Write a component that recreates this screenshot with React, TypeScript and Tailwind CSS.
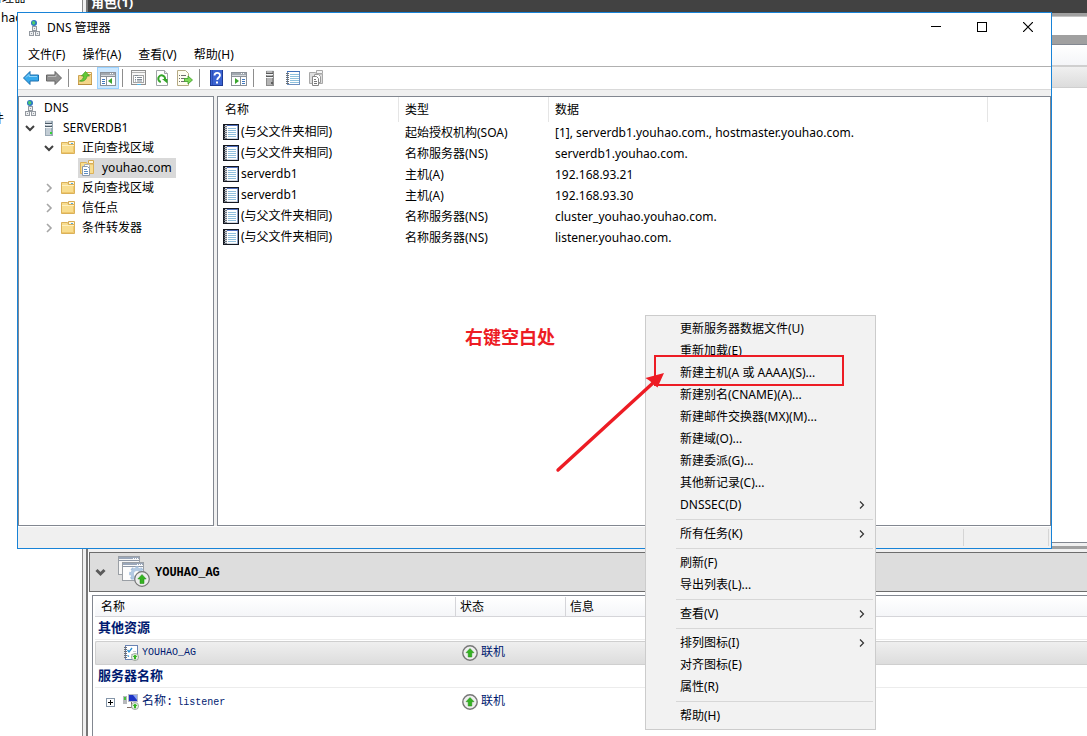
import { useState } from 'react'
import type { ReactNode } from 'react'
import clsx from 'clsx'

interface DnsRecord {
  name: string
  type: string
  data: string
}

interface MenuEntry {
  label: string
  submenu?: boolean
}

const RECORDS: DnsRecord[] = [
  { name: '(与父文件夹相同)', type: '起始授权机构(SOA)', data: '[1], serverdb1.youhao.com., hostmaster.youhao.com.' },
  { name: '(与父文件夹相同)', type: '名称服务器(NS)', data: 'serverdb1.youhao.com.' },
  { name: 'serverdb1', type: '主机(A)', data: '192.168.93.21' },
  { name: 'serverdb1', type: '主机(A)', data: '192.168.93.30' },
  { name: '(与父文件夹相同)', type: '名称服务器(NS)', data: 'cluster_youhao.youhao.com.' },
  { name: '(与父文件夹相同)', type: '名称服务器(NS)', data: 'listener.youhao.com.' },
]

// Each inner array is a block between separators
const CONTEXT_MENU: MenuEntry[][] = [
  [
    { label: '更新服务器数据文件(U)' },
    { label: '重新加载(E)' },
    { label: '新建主机(A 或 AAAA)(S)...' },
    { label: '新建别名(CNAME)(A)...' },
    { label: '新建邮件交换器(MX)(M)...' },
    { label: '新建域(O)...' },
    { label: '新建委派(G)...' },
    { label: '其他新记录(C)...' },
    { label: 'DNSSEC(D)', submenu: true },
  ],
  [{ label: '所有任务(K)', submenu: true }],
  [{ label: '刷新(F)' }, { label: '导出列表(L)...' }],
  [{ label: '查看(V)', submenu: true }],
  [{ label: '排列图标(I)', submenu: true }, { label: '对齐图标(E)' }, { label: '属性(R)' }],
  [{ label: '帮助(H)' }],
]

/* ---------- Icons ---------- */

function Icon({ children, size = 16 }: { children: ReactNode; size?: number }) {
  return (
    <svg width={size} height={size} viewBox={`0 0 ${size} ${size}`} className="shrink-0" aria-hidden="true">
      {children}
    </svg>
  )
}

function DnsIcon() {
  return (
    <Icon>
      <circle cx="8" cy="3" r="3" fill="#2b74c4" />
      <path d="M6.500 1l2 .3 1 1.600-1.600 2L6 3.500z" fill="#4ccf6a" />
      <rect x="6.500" y="6.500" width="4" height="4" fill="#eceef0" stroke="#9399a0" />
      <path d="M8 8.500h1M8.500 11v1" stroke="#9399a0" />
      <rect x="3.500" y="11.500" width="4" height="4" fill="#eceef0" stroke="#9399a0" />
      <rect x="9.500" y="11.500" width="4" height="4" fill="#eceef0" stroke="#9399a0" />
      <path d="M5 13.500h1M11 13.500h1" stroke="#9399a0" />
    </Icon>
  )
}

function ServerIcon({ light = true }: { light?: boolean }) {
  return (
    <Icon>
      <path d="M4 1l1-1h7l-1 1z" fill="#e8ebee" />
      <rect x="4" y="1" width="8" height="15" fill={light ? '#9aa9b5' : '#8c8c8c'} />
      <rect x="5" y="1" width="5" height="14" fill={light ? '#c3cdd5' : '#b5b5b5'} />
      <path d="M4 3.500h7M4 6.500h7" stroke={light ? '#4c5a66' : '#5a5a5a'} />
      <path d="M4 4.500h7M4 7.500h7" stroke="#f4f7f9" />
      <rect x="9" y="12" width="2" height="2" fill={light ? '#35d235' : '#5f5f5f'} />
    </Icon>
  )
}

function FolderIcon() {
  return (
    <Icon>
      <path d="M8.500 1.500h6v4h-6z" fill="#fff7de" stroke="#d5aa52" />
      <path d="M11 3.500h2" stroke="#5aa7de" />
      <path d="M1.500 2.500h6l1 2h6v9h-13z" fill="#f8dd8f" stroke="#dbb159" />
      <path d="M2 5.500h12" stroke="#fdf0c2" />
      <path d="M13.500 6v6.500H2" stroke="#eec76c" fill="none" />
    </Icon>
  )
}

function ZoneIcon() {
  return (
    <Icon>
      <path d="M8.500 .500h5v3h-5z" fill="#fff7de" stroke="#d5aa52" />
      <path d="M.500 2.500h6l1 1.500h6v9.500H.500z" fill="#f8dd8f" stroke="#dbb159" />
      <path d="M4.500 4.500h4l1 1v8h-5z" fill="#fff" stroke="#a5afbb" />
      <path d="M2.500 6.500h5l2 2v7h-7z" fill="#fff" stroke="#8b98a8" />
      <path d="M4 9.500h3M4 11.500h4M4 13.500h4" stroke="#5d8ec2" />
    </Icon>
  )
}

function RecordIcon() {
  return (
    <Icon>
      <rect x="0" y="0" width="16" height="16" fill="#141821" />
      <rect x="2" y="1" width="13" height="14" fill="#d3d9e2" />
      <rect x="4" y="2" width="10" height="12" fill="#fff" />
      <path d="M4 1.500h11" stroke="#4f6fc0" />
      <path d="M5 4.500h8M5 6.500h8M5 8.500h8M5 10.500h8M5 12.500h8" stroke="#8fbfdd" />
      <path d="M1 2.500h3M1 4.500h3M1 6.500h3M1 8.500h3M1 10.500h3M1 12.500h3M1 14.500h3" stroke="#6f757d" />
      <path d="M14.500 2v13" stroke="#8aa0c8" />
    </Icon>
  )
}

function NotebookIcon() {
  return (
    <Icon>
      <rect x="2.500" y="1.500" width="12" height="13" fill="#fff" stroke="#6d8fc0" />
      <path d="M2 1.500h13" stroke="#3f6fb8" />
      <path d="M5 4.500h9M5 6.500h9M5 8.500h9M5 10.500h9M5 12.500h9" stroke="#8fc1dd" />
      <path d="M1 3.500h3M1 5.500h3M1 7.500h3M1 9.500h3M1 11.500h3M1 13.500h3" stroke="#6b7075" />
    </Icon>
  )
}

function ArrowIcon({ forward = false }: { forward?: boolean }) {
  return (
    <Icon>
      {forward ? (
        <path d="M15.500 8L9 1.500V5H.500v6H9v3.500z" fill="#8f8f8f" stroke="#666" />
      ) : (
        <path d="M.500 8L7 1.500V5h8.500v6H7v3.500z" fill="#36a9ec" stroke="#1d6fae" />
      )}
      <path d={forward ? 'M2 6.500h8v-2' : 'M14 6.500H6v-2L3 7.500'} stroke={forward ? '#b9b9b9' : '#8fd4fa'} fill="none" />
    </Icon>
  )
}

function UpFolderIcon() {
  return (
    <Icon>
      <path d="M9.500 2.500h5v3h-5z" fill="#fff7de" stroke="#cda352" />
      <path d="M1.500 5.500h5l1-1h7v10h-13z" fill="#f3d58a" stroke="#cda352" />
      <path d="M1 14.500h14" stroke="#b98e3f" />
      <path d="M2.500 11c2.500-.8 4-2.500 4.200-5H4.500L8.500 1.500l4 4.500H10c-.5 4-3.500 6-7.500 5z" fill="#63c936" stroke="#3d9a20" strokeWidth=".7" />
    </Icon>
  )
}

function PaneIcon({ play = false }: { play?: boolean }) {
  return (
    <Icon>
      <rect x=".500" y="2.500" width="15" height="13" fill="#fff" stroke="#8b9198" />
      <rect x="1" y="3" width="14" height="2" fill="#a2a9b0" />
      <path d="M10 3.500h1M12 3.500h1" stroke="#fff" />
      <path d="M1 5.500h14" stroke="#d5d9dd" />
      <path d="M1 6.500h14" stroke="#8b9198" />
      {play ? (
        <>
          <path d="M9.500 7v8" stroke="#8b9198" />
          <path d="M4 8l4 3-4 3z" fill="#3aa52d" />
          <path d="M11 9.500h3M11 11.500h3M11 13.500h3" stroke="#4079bf" />
        </>
      ) : (
        <>
          <path d="M6.500 7v8" stroke="#8b9198" />
          <path d="M12 8l-4 3 4 3z" fill="#3aa52d" />
          <path d="M2 9.500h3M2 11.500h3M2 13.500h3" stroke="#4079bf" />
        </>
      )}
    </Icon>
  )
}

function PropertiesIcon() {
  return (
    <Icon>
      <rect x=".500" y=".500" width="14" height="14" fill="#f7f7f7" stroke="#8e8e8e" />
      <path d="M1 2.500h13" stroke="#b2b2b2" />
      <rect x="2.500" y="5.500" width="10" height="7" fill="#fff" stroke="#a6a6a6" />
      <path d="M4 5.500h3M4 7.500h1M6 7.500h5M4 9.500h1M6 9.500h5M4 11h1M6 11h5" stroke="#7f8a95" />
      <path d="M6 14.500h4" stroke="#51b5e6" />
    </Icon>
  )
}

function RefreshIcon() {
  return (
    <Icon>
      <path d="M2.500 .500h8l3 3v12h-11z" fill="#fff" stroke="#a0a4a8" />
      <path d="M10.500 .500v3h3" fill="#e8e8e8" stroke="#a0a4a8" />
      <path d="M6.800 12A3.400 3.400 0 1 1 11 9.500" fill="none" stroke="#35a52a" strokeWidth="2" />
      <path d="M8 9h5.500v4.500z" fill="#35a52a" />
    </Icon>
  )
}

function ExportIcon() {
  return (
    <Icon>
      <path d="M.500 .500h8l3 3v12H.500z" fill="#fffdf0" stroke="#b5aa84" />
      <path d="M2 5.500h1M4 5.500h5M2 8.500h1M4 8.500h4M2 11.500h1M4 11.500h4" stroke="#6f6f6f" />
      <path d="M7.500 8.500h3.500V6l4.500 4-4.500 4v-2.500H7.500z" fill="#7ed957" stroke="#3b9c25" strokeWidth=".8" />
    </Icon>
  )
}

function HelpIcon() {
  return (
    <Icon>
      <rect x="2" y="0" width="13" height="16" fill="#3a63d2" />
      <path d="M2.500 0v16" stroke="#1e3a94" />
      <path d="M4.500 0v16" stroke="#2b4fb8" />
      <path d="M14.500 0v16M2 15.500h13" stroke="#1e3a94" />
      <path d="M6.500 5.500C6.500 2 12 2 12 5.300c0 2.200-2.800 2.200-2.800 4.700" fill="none" stroke="#fff" strokeWidth="1.800" />
      <rect x="8" y="11.500" width="2" height="2" fill="#fff" />
    </Icon>
  )
}

function CopyRecordsIcon() {
  return (
    <Icon>
      <path d="M8.500 .500h6v3h-6z" fill="#f3f3f3" stroke="#a8a8a8" />
      <path d="M1.500 2.500h6l1 1.500h6v9.500h-13z" fill="#dedede" stroke="#a8a8a8" />
      <path d="M6.500 4.500h4l2 2v6h-6z" fill="#fff" stroke="#9a9a9a" />
      <path d="M4.500 6.500h4l2 2v7h-6z" fill="#fff" stroke="#868686" />
      <path d="M6 9.500h2M6 11.500h3M6 13.500h3" stroke="#777" />
    </Icon>
  )
}

function OnlineIcon() {
  return (
    <Icon>
      <circle cx="8" cy="8" r="7.200" fill="#eeeeee" stroke="#777" strokeWidth="1.400" />
      <path d="M8 3.500l4 4.200H9.800V12H6.200V7.700H4z" fill="#35b321" stroke="#1f8a12" strokeWidth=".5" />
    </Icon>
  )
}

function ResourceIcon() {
  return (
    <Icon>
      <rect x="2.500" y=".500" width="12" height="14" fill="#fff" stroke="#6a83b4" />
      <path d="M4.500 5l1.500 2 3-4M4.500 10.500l1.500 1" stroke="#2b8fd2" fill="none" strokeWidth="1.300" />
      <path d="M10 6.500h3M8 9.500h5" stroke="#c5cad3" />
      <path d="M1 2.500h3M1 4.500h3M1 6.500h3M1 8.500h3M1 10.500h3M1 12.500h3" stroke="#6b6f75" />
      <circle cx="12" cy="12" r="3.600" fill="#e6efe4" stroke="#8a8f8a" strokeWidth=".7" />
      <path d="M12 9.500l2.500 2.500H13v2.200h-2V12H9.500z" fill="#35b321" />
    </Icon>
  )
}

function NetworkNameIcon() {
  return (
    <Icon>
      <rect x="0" y="2" width="4" height="8" fill="#b7b9bb" />
      <rect x="1" y="3" width="2" height="3" fill="#45c13e" />
      <rect x="5.500" y=".500" width="9" height="7" fill="#1d33c4" stroke="#b5bac6" />
      <path d="M10 1h4v5z" fill="#8fa5f2" />
      <path d="M8.500 8v5M4 13.500h6" stroke="#7b6a62" />
      <circle cx="12" cy="12" r="3.600" fill="#e6efe4" stroke="#8a8f8a" strokeWidth=".7" />
      <path d="M12 9.500l2.500 2.500H13v2.200h-2V12H9.500z" fill="#35b321" />
    </Icon>
  )
}

function ClusterRoleIcon() {
  return (
    <Icon size={32}>
      <rect x=".500" y=".500" width="21" height="18" fill="#f7f7f7" stroke="#9a9fa5" />
      <path d="M1 2h20" stroke="#9aa7ba" strokeWidth="2" />
      <path d="M1 4.500h20" stroke="#8d97a6" />
      <rect x="4.500" y="6.500" width="21" height="18" fill="#fdfdfd" stroke="#9a9fa5" />
      <path d="M5 8h20" stroke="#9aa7ba" strokeWidth="2" />
      <path d="M5 10.500h20" stroke="#8d97a6" />
      <path d="M15 2.500h1M17 2.500h1M19 2.500h1M19 8.500h1M21 8.500h1M23 8.500h1" stroke="#fff" />
      <circle cx="19" cy="18" r="4.800" fill="none" stroke="#b3cae3" strokeWidth="3.500" />
      <circle cx="19" cy="18" r="7" fill="none" stroke="#a3bedc" strokeWidth="1.600" strokeDasharray="3 2.200" />
      <circle cx="24" cy="23" r="7.300" fill="#ededed" stroke="#777" strokeWidth="1.200" />
      <path d="M24 18.500l4.200 4.500H26v4.500h-4V23h-2.200z" fill="#35b321" stroke="#1f8a12" strokeWidth=".5" />
    </Icon>
  )
}

function Chevron({ open = false }: { open?: boolean }) {
  return (
    <svg width="10" height="10" viewBox="0 0 10 10" className="shrink-0" aria-hidden="true">
      <path
        d={open ? 'M1 3l4 4 4-4' : 'M3 1l4 4-4 4'}
        fill="none"
        stroke={open ? '#404040' : '#a6a6a6'}
        strokeWidth={open ? 2 : 1.6}
      />
    </svg>
  )
}

/* ---------- DNS window ---------- */

function ToolButton({ label, active, children }: { label: string; active?: boolean; children: ReactNode }) {
  return (
    <button
      type="button"
      aria-label={label}
      className={clsx(
        'flex size-[22px] items-center justify-center border',
        active ? 'border-[#99d1ff] bg-[#cce8ff]' : 'border-transparent',
      )}
    >
      {children}
    </button>
  )
}

function ToolDivider() {
  return <span className="mr-1 ml-[2px] h-[18px] w-px bg-[#8d8d8d]" />
}

function TreeRow({ open, leaf, icon, label, className, selected }: {
  open?: boolean
  leaf?: boolean
  icon: ReactNode
  label: string
  className?: string
  selected?: boolean
}) {
  return (
    <li className={clsx('flex h-5 items-center whitespace-nowrap', className)}>
      {!leaf && (
        <button type="button" aria-label={label} className="mr-[5px] flex w-3 justify-center">
          <Chevron open={open} />
        </button>
      )}
      <span className={clsx('flex h-5 items-center gap-[6px]', selected && 'bg-[#d9d9d9] pr-1 pl-[2px]')}>
        {icon}
        {label}
      </span>
    </li>
  )
}

function WindowControls() {
  return (
    <div className="flex">
      <button type="button" aria-label="最小化" className="flex h-7 w-[46px] items-center justify-center">
        <svg width="10" height="10" viewBox="0 0 10 10"><path d="M0 4.500h10" stroke="#000" /></svg>
      </button>
      <button type="button" aria-label="最大化" className="flex h-7 w-[46px] items-center justify-center">
        <svg width="10" height="10" viewBox="0 0 10 10"><rect x=".5" y=".5" width="9" height="9" fill="none" stroke="#000" /></svg>
      </button>
      <button type="button" aria-label="关闭" className="flex h-7 w-[46px] items-center justify-center">
        <svg width="10" height="10" viewBox="0 0 10 10"><path d="M0 0l10 10M10 0L0 10" stroke="#000" strokeWidth="1.200" /></svg>
      </button>
    </div>
  )
}

function DnsWindow() {
  return (
    <section className="absolute top-3 right-[35px] bottom-[187px] left-[17px] flex flex-col border border-[#1883d7] bg-[#f0f0f0]">
      <header className="flex h-[30px] items-start justify-between bg-white pl-2">
        <div className="flex h-[30px] items-center gap-[5px]">
          <DnsIcon />
          <h1>DNS 管理器</h1>
        </div>
        <WindowControls />
      </header>

      <nav className="flex h-[23px] items-center gap-px bg-white px-[2px]">
        {['文件(F)', '操作(A)', '查看(V)', '帮助(H)'].map((item) => (
          <button key={item} type="button" className="px-2">{item}</button>
        ))}
      </nav>

      <div className="flex h-6 items-center gap-px border-t border-b border-t-[#b0b0b0] border-b-[#d9d9d9] bg-white pl-[2px]">
        <ToolButton label="后退"><ArrowIcon /></ToolButton>
        <ToolButton label="前进"><ArrowIcon forward /></ToolButton>
        <ToolDivider />
        <ToolButton label="上一级"><UpFolderIcon /></ToolButton>
        <ToolButton label="控制台树" active><PaneIcon /></ToolButton>
        <ToolDivider />
        <ToolButton label="属性"><PropertiesIcon /></ToolButton>
        <ToolButton label="刷新"><RefreshIcon /></ToolButton>
        <ToolButton label="导出列表"><ExportIcon /></ToolButton>
        <ToolDivider />
        <ToolButton label="帮助"><HelpIcon /></ToolButton>
        <ToolButton label="操作窗格"><PaneIcon play /></ToolButton>
        <ToolDivider />
        <ToolButton label="服务器"><ServerIcon light={false} /></ToolButton>
        <ToolButton label="记录"><NotebookIcon /></ToolButton>
        <ToolButton label="区域"><CopyRecordsIcon /></ToolButton>
      </div>

      <div className="mt-[6px] flex min-h-0 flex-1 gap-[3px]">
        <ul className="w-[196px] shrink-0 border border-[#828790] bg-white pt-px">
          <TreeRow leaf icon={<DnsIcon />} label="DNS" className="pl-[3px]" />
          <TreeRow open icon={<ServerIcon />} label="SERVERDB1" className="pl-[5px]" />
          <TreeRow open icon={<FolderIcon />} label="正向查找区域" className="pl-6" />
          <TreeRow leaf selected icon={<ZoneIcon />} label="youhao.com" className="pl-[59px]" />
          <TreeRow icon={<FolderIcon />} label="反向查找区域" className="pl-6" />
          <TreeRow icon={<FolderIcon />} label="信任点" className="pl-6" />
          <TreeRow icon={<FolderIcon />} label="条件转发器" className="pl-6" />
        </ul>

        <div className="min-w-0 flex-1 border border-[#828790] bg-white">
          <table className="w-full table-fixed border-separate border-spacing-0 text-left whitespace-nowrap">
            <colgroup>
              <col className="w-[181px]" />
              <col className="w-[150px]" />
              <col className="w-[439px]" />
              <col />
            </colgroup>
            <thead>
              <tr className="h-[25px]">
                <th className="border-r border-[#e5e5e5] p-0 pl-[7px] font-normal">名称</th>
                <th className="border-r border-[#e5e5e5] p-0 pl-[6px] font-normal">类型</th>
                <th className="border-r border-[#e5e5e5] p-0 pl-[6px] font-normal">数据</th>
                <th className="p-0" />
              </tr>
            </thead>
            <tbody>
              {RECORDS.map((record, i) => (
                <tr key={i} className="h-[21px]">
                  <td className="p-0 pl-[5px]">
                    <span className="flex h-[21px] items-start gap-[2px] pt-[2px]">
                      <RecordIcon />
                      {record.name}
                    </span>
                  </td>
                  <td className="p-0 pl-[6px]">{record.type}</td>
                  <td className="p-0 pl-[6px]">{record.data}</td>
                  <td className="p-0" />
                </tr>
              ))}
            </tbody>
          </table>
        </div>
      </div>

      {/* Status bar */}
      <footer className="flex h-[22px] justify-end border-t border-white py-[2px]">
        <div className="w-[86px] border-r border-l border-[#d5d5d5]" />
        <div className="w-[2px]" />
      </footer>
    </section>
  )
}

function ContextMenu() {
  return (
    <div
      role="menu"
      className="absolute top-[315px] left-[645px] w-[231px] border border-[#cccccc] bg-[#f2f2f2] py-[2px]"
    >
      {CONTEXT_MENU.map((group, i) => (
        <div key={i}>
          {i > 0 && <div className="mr-[2px] ml-[30px] h-[7px] py-[3px]"><div className="h-px bg-[#d7d7d7]" /></div>}
          {group.map((entry) => (
            <button
              key={entry.label}
              type="button"
              role="menuitem"
              className="flex h-[22px] w-full items-center justify-between pr-[9px] pl-[34px] text-left hover:bg-[#91c9f7]"
            >
              {entry.label}
              {entry.submenu && (
                <svg width="8" height="8" viewBox="0 0 8 8" aria-hidden="true">
                  <path d="M2 .5L5.500 4 2 7.500" fill="none" stroke="#333" strokeWidth="1.200" />
                </svg>
              )}
            </button>
          ))}
        </div>
      ))}
    </div>
  )
}

/** Red label, frame and arrow drawn over the desktop */
function Annotations() {
  return (
    <div className="pointer-events-none">
      <p className="absolute top-[325px] left-[465px] text-[18px] leading-6 font-bold text-[#ed1c24]">右键空白处</p>
      <div className="absolute top-[355px] left-[654px] h-[31px] w-[190px] border-2 border-[#ed1c24]" />
      <svg width="112" height="104" viewBox="0 0 112 104" className="absolute top-[370px] left-[555px]" aria-hidden="true">
        <path d="M3 100L98 13" stroke="#ed1c24" strokeWidth="3.400" strokeLinecap="round" />
        <path d="M109 3L102.500 17.500L98 14L95 11L90.500 8z" fill="#ed1c24" />
      </svg>
    </div>
  )
}

/* ---------- Cluster manager behind ---------- */

function GroupRow({ label }: { label: string }) {
  return (
    <tr className="h-6">
      <th colSpan={3} className="p-0 pb-px">
        <div className="flex h-[23px] items-center border-b border-[#ececec] pt-[2px] pl-[3px] text-[13px] font-bold text-[#001a70]">{label}</div>
      </th>
    </tr>
  )
}

function OnlineStatus() {
  return (
    <span className="flex items-center gap-[3px]">
      <OnlineIcon />
      联机
    </span>
  )
}

function ClusterDetails() {
  const [expanded, setExpanded] = useState(true)

  return (
    <section className="flex h-[184px] shrink-0 flex-col pl-px">
      <div className="flex h-10 shrink-0 items-center border-y border-l border-[#6d6d6d] bg-[#dddddd] pl-[5px]">
        <button type="button" aria-label="展开" onClick={() => setExpanded(!expanded)}>
          <svg width="11" height="10" viewBox="0 0 11 10" aria-hidden="true">
            <path d="M1.500 3l4 4 4-4" fill="none" stroke="#5a5a5a" strokeWidth="3" />
          </svg>
        </button>
        <span className="ml-3"><ClusterRoleIcon /></span>
        <h2 className="ml-[5px] pt-[2px] font-['Liberation_Mono','Noto_Sans_CJK_SC',monospace] text-[12px] font-bold">YOUHAO_AG</h2>
      </div>
      <div className="mt-[3px] ml-[3px] flex-1 border-t border-l border-[#828790] pt-px pl-[2px]">
        {expanded && (
          <table className="w-full table-fixed border-separate border-spacing-0 text-left font-['Liberation_Mono','Noto_Sans_CJK_SC',monospace] text-[12px] leading-4 whitespace-nowrap text-[#001a70]">
            <colgroup>
              <col className="w-[361px]" />
              <col className="w-[110px]" />
              <col />
            </colgroup>
            <thead>
              <tr className="h-5 bg-linear-to-b from-white to-[#f4f5f8] text-black">
                <th className="border-r border-b border-[#d5d5d9] p-0 pt-[2px] pl-[6px] font-normal">名称</th>
                <th className="border-r border-b border-[#d5d5d9] p-0 pt-[2px] pl-[4px] font-normal">状态</th>
                <th className="border-b border-[#d5d5d9] p-0 pt-[2px] pl-[4px] font-normal">信息</th>
              </tr>
            </thead>
            <tbody>
              <GroupRow label="其他资源" />
              <tr className="h-6 bg-linear-to-b from-[#f0f0f0] to-[#dcdcdc]">
                <td className="rounded-l-[2px] border-y border-l border-[#cfcfcf] p-0 pl-[27px]">
                  <span className="flex items-center gap-[3px] text-[10px]">
                    <ResourceIcon />
                    YOUHAO_AG
                  </span>
                </td>
                <td className="border-y border-[#cfcfcf] p-0 pl-[6px]"><OnlineStatus /></td>
                <td className="border-y border-[#cfcfcf] p-0" />
              </tr>
              <GroupRow label="服务器名称" />
              <tr className="h-[26px]">
                <td className="p-0 pl-[11px]">
                  <span className="flex items-center">
                    <button type="button" aria-label="展开 listener" className="mr-2 flex size-[9px] items-center justify-center border border-[#8495a8] bg-white">
                      <svg width="5" height="5" viewBox="0 0 5 5"><path d="M0 2.500h5M2.500 0v5" stroke="#000" /></svg>
                    </button>
                    <NetworkNameIcon />
                    <span className="ml-[3px]">名称:<span className="ml-1 text-[10px]">listener</span></span>
                  </span>
                </td>
                <td className="p-0 pl-[6px]"><OnlineStatus /></td>
                <td className="p-0" />
              </tr>
            </tbody>
          </table>
        )}
      </div>
    </section>
  )
}

function ClusterRoles() {
  return (
    <section className="flex min-h-0 flex-1 flex-col">
      <div className="h-[13px] shrink-0 overflow-hidden bg-[#424242] pl-[3px]">
        <h2 className="-mt-2 text-[13px] leading-5 font-bold text-white">角色(1)</h2>
      </div>
      <div className="h-1 shrink-0 border-b border-[#c4c4c4] bg-[#a0a0a0]" />
      <div className="h-[18px] shrink-0 bg-white" />
      <div className="h-[10px] shrink-0 border-b border-[#828790] bg-[#a0a0a0]" />
      <div className="h-[21px] shrink-0 border-b border-[#cfcfcf] bg-linear-to-b from-white to-[#f4f5f8]" />
      <div className="h-[22px] shrink-0 border-y border-[#cfcfcf] bg-linear-to-b from-[#f0f0f0] to-[#dcdcdc]" />
      <div className="flex-1 border-b border-[#828790] bg-white" />
      <div className="h-[9px] shrink-0 border-y-[3px] border-[#f0f0f0] bg-[#a0a0a0]" />
    </section>
  )
}

export default function App() {
  return (
    <div className="relative flex h-screen overflow-hidden bg-white font-['Noto_Sans','Noto_Sans_CJK_SC',sans-serif] text-[12px] leading-4 text-black">
      <aside className="w-[82px] shrink-0 overflow-hidden">
        <ul className="-mt-3 whitespace-nowrap">
          <li className="-ml-[10px] h-5 leading-5">管理器</li>
          <li className="h-[100px] pl-px leading-5">hao</li>
          <li className="-ml-2 h-5 pt-px leading-5">件</li>
        </ul>
      </aside>
      <div className="w-[6px] shrink-0 border-r-2 border-l border-r-[#777777] border-l-[#8a8a8a] bg-[#f0f0f0]" />
      <main className="flex min-w-0 flex-1 flex-col">
        <ClusterRoles />
        <ClusterDetails />
      </main>

      <DnsWindow />
      <ContextMenu />
      <Annotations />
    </div>
  )
}
